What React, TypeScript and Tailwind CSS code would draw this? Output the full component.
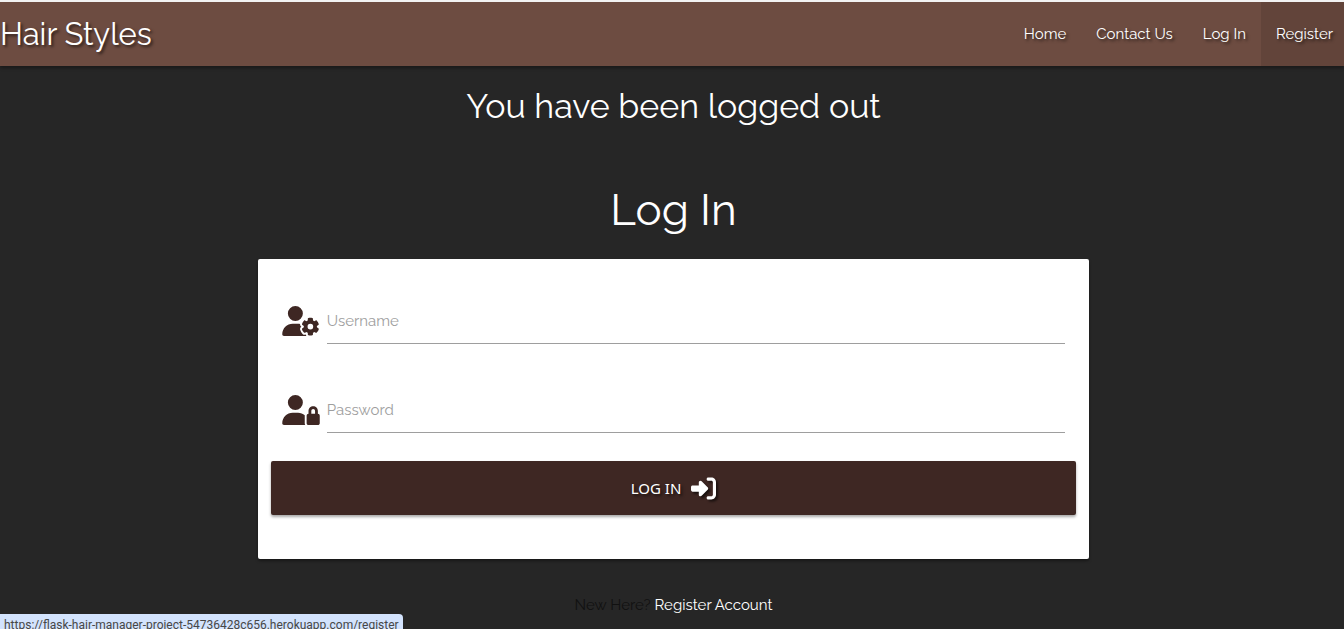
import type { ReactNode } from "react";
import { FaRightToBracket, FaUserGear, FaUserLock } from "react-icons/fa6";

const links = ["Home", "Contact Us", "Log In"];

function Field({ id, label, type, icon }: { id: string; label: string; type: string; icon: ReactNode }) {
  return (
    <div className="flex items-start gap-[7px] px-[11px] text-[#3e2723]">
      <span className="flex h-[42px] w-[38px] items-center">{icon}</span>
      <div className="grid flex-1">
        <input
          id={id}
          type={type}
          placeholder=" "
          className="peer col-start-1 row-start-1 h-11 w-full border-b border-[#9e9e9e] bg-transparent text-[15px] text-black outline-none"
        />
        <label
          htmlFor={id}
          className="pointer-events-none invisible col-start-1 row-start-1 text-[15px] leading-[42px] text-[#9e9e9e] peer-placeholder-shown:visible"
        >
          {label}
        </label>
      </div>
    </div>
  );
}

export default function App() {
  return (
    <div className="min-h-screen overflow-hidden border-t-2 border-[#f2f2f2] bg-[#262626] font-['Raleway','Lato',sans-serif] text-[15px] text-white">
      <nav className="flex h-16 items-center justify-between bg-[#6d4c41] shadow-[0_2px_3px_rgba(0,0,0,0.35)] [text-shadow:2px_2px_3px_rgba(0,0,0,0.6)]">
        <a href="#home" className="text-[31px] leading-[64px]">Hair Styles</a>
        <ul className="flex h-full leading-[64px]">
          {links.map((link) => (
            <li key={link}><a href="#nav" className="block px-[15px]">{link}</a></li>
          ))}
          <li><a href="#register" className="block bg-[#62443a] pr-[11px] pl-[15px]">Register</a></li>
        </ul>
      </nav>
      <main className="flex flex-col items-center pl-[3px]">
        <h4 className="mt-5 text-[34px] leading-10">You have been logged out</h4>
        <h3 className="mt-[59px] text-[44px] leading-[50px]">Log In</h3>
        <form
          onSubmit={(event) => event.preventDefault()}
          className="mt-6 flex w-[62%] flex-col gap-[45px] rounded-xs bg-white px-[13px] pt-[41px] pb-11 shadow-[0_2px_3px_rgba(0,0,0,0.4)]"
        >
          <Field id="username" label="Username" type="text" icon={<FaUserGear className="h-[30px] w-[38px]" />} />
          <div className="flex flex-col gap-7">
            <Field id="password" label="Password" type="password" icon={<FaUserLock className="h-[30px] w-[38px]" />} />
            <button
              type="submit"
              className="flex h-[54px] items-center justify-center gap-2.5 rounded-xs bg-[#3e2723] font-['Noto_Sans',sans-serif] text-white shadow-[0_2px_3px_rgba(0,0,0,0.35)] [text-shadow:2px_2px_3px_rgba(0,0,0,0.6)]"
            >
              LOG IN
              <FaRightToBracket className="size-[25px] drop-shadow-[2px_2px_1px_rgba(0,0,0,0.6)]" />
            </button>
          </div>
        </form>
        <p className="mt-[34px] leading-6 text-[#111111]">
          New Here? <a href="#register" className="text-white">Register Account</a>
        </p>
      </main>
      <div className="fixed bottom-0 left-0 h-[15px] overflow-hidden rounded-tr-sm bg-[#d3e3fd] pr-1 pl-1 font-['Roboto',sans-serif] text-[12px] leading-[22px] text-[#474747]">
        https://flask-hair-manager-project-54736428c656.herokuapp.com/register
      </div>
    </div>
  );
}
